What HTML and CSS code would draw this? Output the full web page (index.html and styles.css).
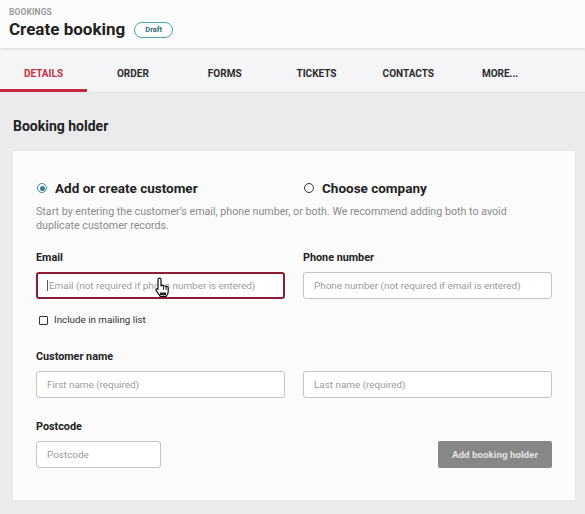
FILE: index.html
```html
<!DOCTYPE html>
<html lang="en">
<head>
<meta charset="utf-8">
<title>Create booking</title>
<link rel="stylesheet" href="styles.css">
</head>
<body>
<header class="page-header">
  <div class="crumb">BOOKINGS</div>
  <div class="title-row">
    <h1 class="title">Create booking</h1>
    <span class="badge">Draft</span>
  </div>
</header>
<nav class="tabs">
  <div class="tab active">DETAILS</div>
  <div class="tab">ORDER</div>
  <div class="tab">FORMS</div>
  <div class="tab">TICKETS</div>
  <div class="tab">CONTACTS</div>
  <div class="tab">MORE...</div>
</nav>
<main class="main">
  <h2 class="section-title">Booking holder</h2>
  <section class="card">
    <div class="grid radios">
      <label class="radio"><span class="radio-dot checked"></span>Add or create customer</label>
      <label class="radio"><span class="radio-dot"></span>Choose company</label>
    </div>
    <p class="desc">Start by entering the customer’s email, phone number, or both. We recommend adding both to avoid duplicate customer records.</p>
    <div class="grid fields">
      <div class="field">
        <div class="label">Email</div>
        <div class="input focused"><span class="caret"></span>Email (not required if phone number is entered)</div>
        <svg class="cursor" width="14" height="20" viewBox="0 0 14 20">
          <path d="M4.5 1.2c.9 0 1.5.6 1.5 1.5v6.1c.5-.7 2.2-.7 2.6.4.5-.7 2.2-.6 2.5.5.6-.5 2.1-.3 2.1 1v4.1c0 2.2-1 3.6-2 4.5H5.2L1.3 13.6c-.7-.9.4-2.3 1.6-1.4L3 12.3V2.7c0-.9.6-1.5 1.5-1.5z" fill="#fff" stroke="#111" stroke-width="1.2" stroke-linejoin="round"/>
          <path d="M8.6 9.4v3.4M11.1 10v2.8" stroke="#111" stroke-width="1"/>
          <rect x="5" y="15.5" width="6" height="2.6" fill="#222"/>
        </svg>
        <label class="check"><span class="box"></span>Include in mailing list</label>
      </div>
      <div class="field">
        <div class="label">Phone number</div>
        <div class="input">Phone number (not required if email is entered)</div>
      </div>
    </div>
    <div class="label name-label">Customer name</div>
    <div class="grid fields">
      <div class="input">First name (required)</div>
      <div class="input">Last name (required)</div>
    </div>
    <div class="label post-label">Postcode</div>
    <div class="post-row">
      <div class="input postcode">Postcode</div>
      <button class="btn" type="button">Add booking holder</button>
    </div>
  </section>
</main>
</body>
</html>
```
FILE: styles.css
```css
* { box-sizing: border-box; }
html, body { margin: 0; padding: 0; }
body {
  font-family: Roboto, "Liberation Sans", Arial, sans-serif;
  background: #ebeaec;
  color: #222;
  width: 585px;
  height: 514px;
  overflow: hidden;
}
.page-header {
  background: #fdfcfd;
  height: 48px;
  padding: 7px 9px 0;
  position: relative;
  z-index: 2;
  box-shadow: 0 1px 3px rgba(0,0,0,0.12);
}
.crumb {
  font-size: 8.5px;
  font-weight: 700;
  color: #9a9a9a;
  line-height: 10px;
  letter-spacing: 0.1px;
}
.title-row {
  display: flex;
  align-items: center;
  gap: 9px;
  margin-top: 1px;
}
.title {
  margin: 0;
  font-size: 17px;
  font-weight: 700;
  line-height: 22px;
  color: #222;
}
.badge {
  display: inline-flex;
  align-items: center;
  justify-content: center;
  height: 16px;
  width: 39px;
  border: 1.5px solid #4aa3b0;
  border-radius: 9px;
  font-size: 7.5px;
  font-weight: 700;
  color: #2c6c7a;
  margin-top: 1px;
}
.tabs {
  display: flex;
  height: 45px;
  background: #f5f4f6;
  border-bottom: 1px solid #e6e5e7;
}
.tab {
  width: 91.8px;
  display: flex;
  align-items: center;
  justify-content: center;
  font-size: 10px;
  font-weight: 700;
  color: #2b2b2b;
  padding-top: 9px;
  border-bottom: 3px solid transparent;
}
.tab.active {
  width: 87px;
  color: #c23040;
  border-bottom-color: #c4283c;
}
.main {
  padding: 0 10px 0 13px;
}
.section-title {
  margin: 0;
  padding-top: 24px;
  font-size: 14px;
  font-weight: 700;
  line-height: 18px;
  color: #222;
}
.card {
  margin-top: 16px;
  width: 562px;
  background: #fbfbfc;
  padding: 28px 23px 32px;
  box-shadow: 0 0 2px rgba(0,0,0,0.05);
}
.grid {
  display: grid;
  grid-template-columns: 249px 249px;
  column-gap: 18px;
}
.radio {
  display: flex;
  align-items: center;
  font-size: 13.5px;
  font-weight: 700;
  line-height: 18px;
  color: #222;
}
.radio-dot {
  width: 10px;
  height: 10px;
  border: 1.3px solid #333;
  border-radius: 50%;
  margin: 0 8px 0 1px;
  display: inline-flex;
  align-items: center;
  justify-content: center;
}
.radio-dot.checked { border-color: #3a8f9c; }
.radio-dot.checked::before {
  content: "";
  width: 5px;
  height: 5px;
  border-radius: 50%;
  background: #2f8190;
}
.desc {
  margin: 8px 0 0;
  font-size: 10.7px;
  line-height: 14px;
  color: #8a8a8a;
  max-width: 490px;
}
.label {
  font-size: 10.8px;
  font-weight: 700;
  line-height: 14px;
  color: #222;
}
.fields .label { margin-top: 18px; margin-bottom: 7px; }
.field { position: relative; }
.input {
  height: 27px;
  border: 1px solid #c4c4c6;
  border-radius: 3px;
  background: #fff;
  display: flex;
  align-items: center;
  padding-left: 10px;
  font-size: 9.9px;
  color: #9a9a9a;
  white-space: nowrap;
  overflow: hidden;
}
.input.focused {
  border: 2px solid #8c1c36;
  padding-left: 9px;
}
.caret {
  width: 1px;
  height: 11px;
  background: #555;
  margin-right: 1px;
}
.cursor {
  position: absolute;
  left: 119px;
  top: 44px;
}
.check {
  display: flex;
  align-items: center;
  margin-top: 14px;
  margin-left: 3px;
  font-size: 9.8px;
  line-height: 14px;
  color: #333;
}
.box {
  width: 9px;
  height: 9px;
  border: 1.2px solid #333;
  border-radius: 1px;
  margin-right: 6px;
}
.name-label { margin-top: 23px; margin-bottom: 7px; }
.post-label { margin-top: 22px; margin-bottom: 7px; }
.post-row {
  display: flex;
  justify-content: space-between;
  align-items: center;
}
.postcode { width: 125px; }
.btn {
  width: 114px;
  height: 27px;
  border: 0;
  border-radius: 2px;
  background: #878787;
  color: #e2e2e2;
  font-family: inherit;
  font-size: 9.8px;
  font-weight: 700;
  padding: 0;
}
```
